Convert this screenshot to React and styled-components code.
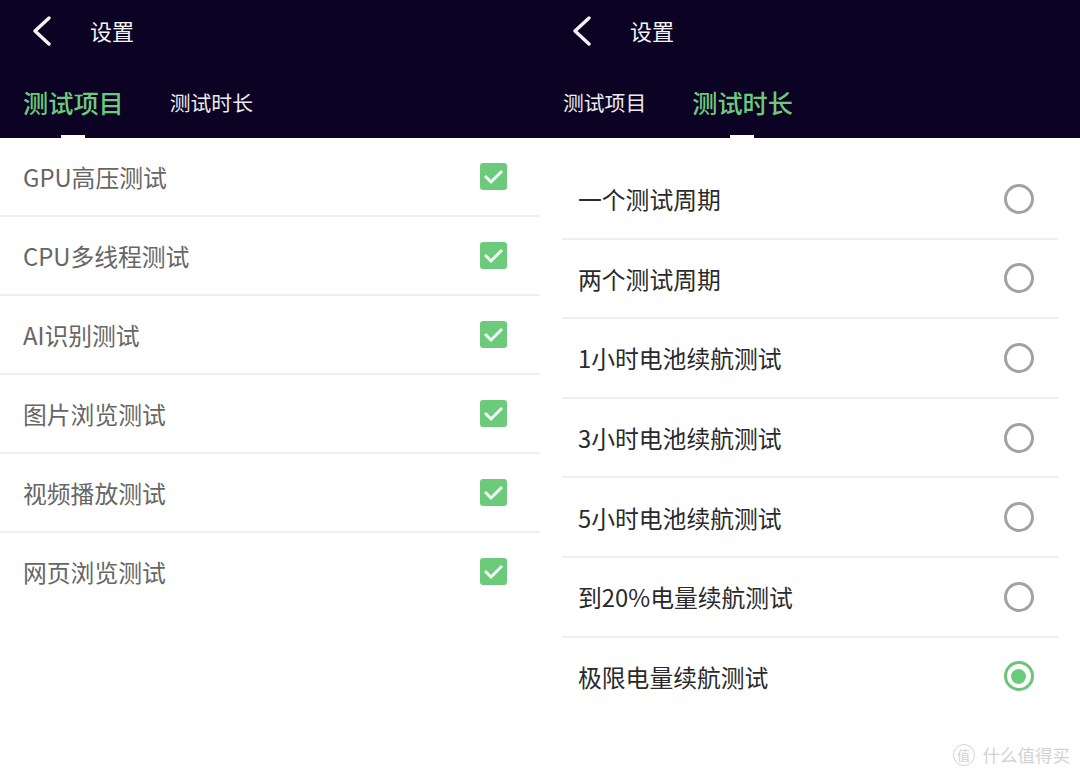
import React from "react";
import styled, { createGlobalStyle } from "styled-components";

const GlobalStyle = createGlobalStyle`
  html, body {
    margin: 0;
    padding: 0;
    background: #fff;
    font-family: "Noto Sans CJK SC", "Noto Sans", sans-serif;
  }
`;

const Page = styled.div`
  position: relative;
  width: 1080px;
  height: 777px;
  display: flex;
  overflow: hidden;
  background: #fff;
`;

const Panel = styled.section`
  width: 540px;
  flex: none;
`;

const Header = styled.header`
  height: 138px;
  background: #0c0224;
  display: flex;
  flex-direction: column;
`;

const TitleBar = styled.div`
  height: 62px;
  display: flex;
  align-items: center;
  padding-left: 32px;
  color: #f4f4f4;
  svg {
    display: block;
    flex: none;
  }
`;

const Title = styled.h1`
  margin: -3px 0 0 38px;
  font-size: 22px;
  font-weight: 400;
  line-height: 1;
`;

const Tabs = styled.div`
  display: flex;
  align-items: center;
  gap: 46px;
  padding: 23px 0 0 23px;
`;

const Tab = styled.div`
  position: relative;
  font-size: ${(p) => (p.$active ? "25.2px" : "20.8px")};
  font-weight: ${(p) => (p.$active ? 500 : 400)};
  color: ${(p) => (p.$active ? "#6ccb7a" : "#ececf0")};
  line-height: 34px;
  ${(p) =>
    p.$active &&
    `
    &::after {
      content: "";
      position: absolute;
      left: 38px;
      bottom: -19px;
      width: 24px;
      height: 3px;
      background: #fff;
    }
  `}
`;

const CheckList = styled.ul`
  list-style: none;
  margin: 0;
  padding: 0;
`;

const CheckRow = styled.li`
  height: 79px;
  box-sizing: border-box;
  display: flex;
  align-items: center;
  justify-content: space-between;
  padding: 0 33px 0 23px;
  font-size: 23.8px;
  color: #666;
  border-bottom: 2px solid #eeeeee;
  &:last-child {
    border-bottom-color: transparent;
  }
`;

const CheckBox = styled.span`
  width: 27px;
  height: 27px;
  border-radius: 3px;
  background: #6ccb7a;
  display: flex;
  align-items: center;
  justify-content: center;
`;

const RadioList = styled.ul`
  list-style: none;
  margin: 22px 22px 0;
  padding: 0;
`;

const RadioRow = styled.li`
  height: 79.6px;
  box-sizing: border-box;
  display: flex;
  align-items: center;
  justify-content: space-between;
  padding: 0 24.5px 0 16px;
  font-size: 23.8px;
  color: #2a2a2a;
  border-bottom: 2px solid #eeeeee;
  &:last-child {
    border-bottom-color: transparent;
  }
`;

const Radio = styled.span`
  width: 30px;
  height: 30px;
  box-sizing: border-box;
  border-radius: 50%;
  border: 3px solid ${(p) => (p.$on ? "#6cc47a" : "#a2a2a2")};
  display: flex;
  align-items: center;
  justify-content: center;
  &::after {
    content: "";
    display: ${(p) => (p.$on ? "block" : "none")};
    width: 15px;
    height: 15px;
    border-radius: 50%;
    background: #6ccb7a;
  }
`;

const Watermark = styled.div`
  position: absolute;
  right: 10px;
  bottom: 11px;
  display: flex;
  align-items: center;
  gap: 8px;
  color: #d2d2d2;
  font-size: 17.5px;
  line-height: 22px;
`;

const WatermarkBadge = styled.span`
  width: 20px;
  height: 20px;
  border: 1px solid #d2d2d2;
  border-radius: 50%;
  display: flex;
  align-items: center;
  justify-content: center;
  font-size: 13px;
`;

const checks = ["GPU高压测试", "CPU多线程测试", "AI识别测试", "图片浏览测试", "视频播放测试", "网页浏览测试"];
const durations = ["一个测试周期", "两个测试周期", "1小时电池续航测试", "3小时电池续航测试", "5小时电池续航测试", "到20%电量续航测试", "极限电量续航测试"];

function Back() {
  return (
    <svg width="20" height="30" viewBox="0 0 20 30" fill="none">
      <path d="M17 2 L3 15 L17 28" stroke="currentColor" strokeWidth="3.4" strokeLinecap="round" strokeLinejoin="round" />
    </svg>
  );
}

function Top({ active }) {
  return (
    <Header>
      <TitleBar>
        <Back />
        <Title>设置</Title>
      </TitleBar>
      <Tabs>
        <Tab $active={active === 0}>测试项目</Tab>
        <Tab $active={active === 1}>测试时长</Tab>
      </Tabs>
    </Header>
  );
}

export default function App() {
  return (
    <Page>
      <GlobalStyle />
      <Panel>
        <Top active={0} />
        <CheckList>
          {checks.map((c) => (
            <CheckRow key={c}>
              {c}
              <CheckBox>
                <svg width="21" height="17" viewBox="0 0 21 17" fill="none">
                  <path d="M2 8 L8 14 L19 3" stroke="#f2fbf3" strokeWidth="3" />
                </svg>
              </CheckBox>
            </CheckRow>
          ))}
        </CheckList>
      </Panel>
      <Panel>
        <Top active={1} />
        <RadioList>
          {durations.map((d, i) => (
            <RadioRow key={d}>
              {d}
              <Radio $on={i === durations.length - 1} />
            </RadioRow>
          ))}
        </RadioList>
      </Panel>
      <Watermark>
        <WatermarkBadge>值</WatermarkBadge>
        什么值得买
      </Watermark>
    </Page>
  );
}
